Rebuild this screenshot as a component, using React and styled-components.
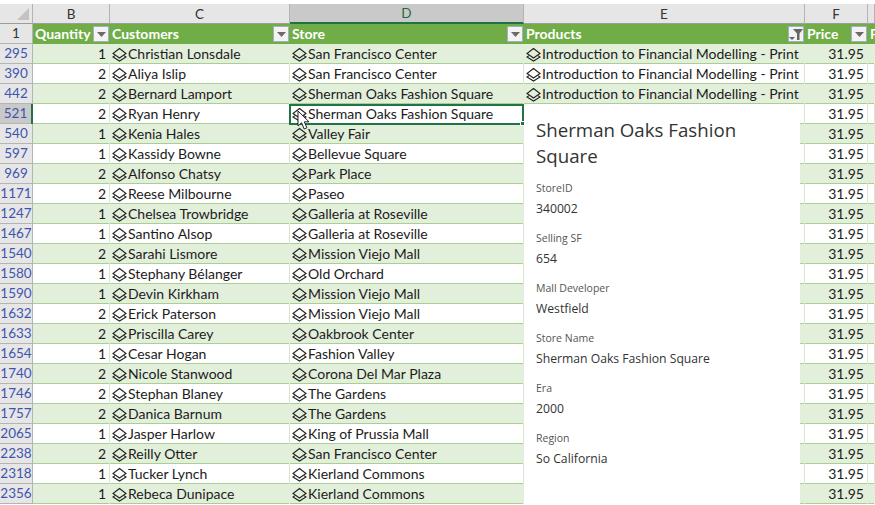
import React from "react";
import styled, { createGlobalStyle } from "styled-components";

const columns = "33px 77px 180px 234px 281px 63px 7px";
const product = "Introduction to Financial Modelling - Print";

const orders = [
  ["295", 1, "Christian Lonsdale", "San Francisco Center", true],
  ["390", 2, "Aliya Islip", "San Francisco Center", true],
  ["442", 2, "Bernard Lamport", "Sherman Oaks Fashion Square", true],
  ["521", 2, "Ryan Henry", "Sherman Oaks Fashion Square"],
  ["540", 1, "Kenia Hales", "Valley Fair"],
  ["597", 1, "Kassidy Bowne", "Bellevue Square"],
  ["969", 2, "Alfonso Chatsy", "Park Place"],
  ["1171", 2, "Reese Milbourne", "Paseo"],
  ["1247", 1, "Chelsea Trowbridge", "Galleria at Roseville"],
  ["1467", 1, "Santino Alsop", "Galleria at Roseville"],
  ["1540", 2, "Sarahi Lismore", "Mission Viejo Mall"],
  ["1580", 1, "Stephany Bélanger", "Old Orchard"],
  ["1590", 1, "Devin Kirkham", "Mission Viejo Mall"],
  ["1632", 2, "Erick Paterson", "Mission Viejo Mall"],
  ["1633", 2, "Priscilla Carey", "Oakbrook Center"],
  ["1654", 1, "Cesar Hogan", "Fashion Valley"],
  ["1740", 2, "Nicole Stanwood", "Corona Del Mar Plaza"],
  ["1746", 2, "Stephan Blaney", "The Gardens"],
  ["1757", 2, "Danica Barnum", "The Gardens"],
  ["2065", 1, "Jasper Harlow", "King of Prussia Mall"],
  ["2238", 2, "Reilly Otter", "San Francisco Center"],
  ["2318", 1, "Tucker Lynch", "Kierland Commons"],
  ["2356", 1, "Rebeca Dunipace", "Kierland Commons"],
];

const details = [
  ["StoreID", "340002"],
  ["Selling SF", "654"],
  ["Mall Developer", "Westfield"],
  ["Store Name", "Sherman Oaks Fashion Square"],
  ["Era", "2000"],
  ["Region", "So California"],
];

const GlobalStyle = createGlobalStyle`
  html, body {
    margin: 0;
    height: 100%;
    overflow: hidden;
    background: #fff;
  }
`;

const Sheet = styled.div`
  position: relative;
  width: 875px;
  height: 505px;
  overflow: hidden;
  padding-top: 4px;
  box-sizing: border-box;
  font-family: Lato, "Liberation Sans", sans-serif;
  font-size: 14px;
  color: #1c1c1c;
`;

const Row = styled.div`
  display: grid;
  grid-template-columns: ${columns};
  height: 20px;
`;

const Corner = styled.div`
  position: relative;
  background: #e6e6e6;
  border-right: 1px solid #b4b4b4;
  border-bottom: 1px solid #9c9c9c;
  &::after {
    content: "";
    position: absolute;
    right: 3px;
    bottom: 3px;
    border-style: solid;
    border-width: 0 0 12px 12px;
    border-color: transparent transparent #c2c2c2 transparent;
  }
`;

const ColumnHead = styled.div`
  display: flex;
  align-items: center;
  justify-content: center;
  background: ${p => (p.$active ? "#c9c9c9" : "#e6e6e6")};
  color: ${p => (p.$active ? "#1f6b43" : "#333")};
  border-right: 1px solid #b4b4b4;
  border-bottom: ${p => (p.$active ? "2px solid #217346" : "1px solid #9c9c9c")};
  font-size: 13.5px;
`;

const RowHead = styled.div`
  display: flex;
  align-items: center;
  justify-content: center;
  padding-bottom: 2px;
  background: ${p => (p.$active ? "#c9c9c9" : "#e6e6e6")};
  color: ${p => p.$color || "#3f55ad"};
  border-right: ${p => (p.$active ? "2px solid #217346" : "1px solid #b4b4b4")};
  box-shadow: inset 0 -1px 0 #b4b4b4;
  box-sizing: border-box;
  font-size: 13.5px;
`;

const TitleCell = styled.div`
  display: flex;
  align-items: center;
  justify-content: space-between;
  min-width: 0;
  overflow: hidden;
  padding: 0 1px 0 2px;
  background: #70ad47;
  color: #fff;
  font-weight: 700;
  white-space: nowrap;
`;

const TitleText = styled.span`
  padding-bottom: 2px;
`;

const FilterButton = styled.span`
  display: flex;
  flex: none;
  align-items: center;
  justify-content: center;
  box-sizing: border-box;
  width: 16px;
  height: 16px;
  background: #f3f3f3;
  border: 1px solid #a9adc4;
`;

const Cell = styled.div`
  display: flex;
  align-items: center;
  justify-content: ${p => (p.$number ? "flex-end" : "flex-start")};
  min-width: 0;
  overflow: hidden;
  padding: ${p => (p.$number ? "0 3px 0 0" : "0 0 0 2px")};
  box-sizing: border-box;
  background: ${p => (p.$striped ? "#e2efda" : "#fff")};
  box-shadow: inset 0 -1px 0 #a9d08e;
  border-right: 1px solid ${p => (p.$striped ? "#e2efda" : "#d9e6d0")};
  white-space: nowrap;
`;

const CellText = styled.span`
  margin-left: ${p => (p.$number ? 0 : 1)}px;
  padding-bottom: 2px;
`;

const Selection = styled.div`
  position: absolute;
  left: 289px;
  top: 104px;
  width: 235px;
  height: 21px;
  box-sizing: border-box;
  border: 2px solid #217346;
  &::after {
    content: "";
    position: absolute;
    right: -3px;
    bottom: -3px;
    width: 5px;
    height: 5px;
    background: #217346;
    border: 1px solid #fff;
    box-sizing: border-box;
  }
`;

const Pointer = styled.svg`
  position: absolute;
  left: 297px;
  top: 110px;
`;

const Card = styled.aside`
  position: absolute;
  left: 524px;
  top: 105px;
  width: 276px;
  height: 400px;
  box-sizing: border-box;
  padding: 12px 12px 0;
  background: #fff;
  font-family: "Open Sans", "Noto Sans", sans-serif;
  color: #333;
`;

const CardTitle = styled.h2`
  margin: 0 0 11px;
  font-size: 18.7px;
  font-weight: 400;
  line-height: 26px;
`;

const Field = styled.div`
  height: 50px;
`;

const FieldLabel = styled.div`
  font-size: 10.5px;
  line-height: 16px;
  color: #555;
`;

const FieldValue = styled.div`
  margin-top: 4px;
  font-size: 12.2px;
  line-height: 18px;
`;

const DataType = () => (
  <svg width="15" height="15" viewBox="0 0 15 15" fill="none" stroke="#222" strokeWidth="1.1" style={{ flex: "none" }}>
    <path d="M7.5 1.5 14 6.5 7.5 11 1 6.5Z" />
    <path d="M3 8.6 1 10 7.5 14 14 10 12 8.6" />
  </svg>
);

const Arrow = () => (
  <svg width="9" height="5" viewBox="0 0 9 5">
    <path d="M0 0h9L4.5 5Z" fill="#6b6b6b" />
  </svg>
);

const Funnel = () => (
  <svg width="14" height="13" viewBox="0 0 14 13">
    <path d="M4 1h10L10.5 5.5V12H8V5.5Z" fill="#666" />
    <path d="M0 9h6L3 12Z" fill="#666" />
  </svg>
);

const Title = ({ children, filtered }) => (
  <TitleCell>
    <TitleText>{children}</TitleText>
    <FilterButton>{filtered ? <Funnel /> : <Arrow />}</FilterButton>
  </TitleCell>
);

const Typed = ({ children, striped }) => (
  <Cell $striped={striped}>
    <DataType />
    <CellText>{children}</CellText>
  </Cell>
);

const Amount = ({ children, striped }) => (
  <Cell $number $striped={striped}>
    <CellText $number>{children}</CellText>
  </Cell>
);

export default function App() {
  return (
    <Sheet>
      <GlobalStyle />
      <Row>
        <Corner />
        <ColumnHead>B</ColumnHead>
        <ColumnHead>C</ColumnHead>
        <ColumnHead $active>D</ColumnHead>
        <ColumnHead>E</ColumnHead>
        <ColumnHead>F</ColumnHead>
        <ColumnHead />
      </Row>
      <Row>
        <RowHead $color="#333">1</RowHead>
        <Title>Quantity</Title>
        <Title>Customers</Title>
        <Title>Store</Title>
        <Title filtered>Products</Title>
        <Title>Price</Title>
        <TitleCell>
          <TitleText>P</TitleText>
        </TitleCell>
      </Row>
      {orders.map(([id, qty, customer, store, showProduct], i) => {
        const striped = i % 2 === 0;
        return (
          <Row key={id}>
            <RowHead $active={id === "521"}>{id}</RowHead>
            <Amount striped={striped}>{qty}</Amount>
            <Typed striped={striped}>{customer}</Typed>
            <Typed striped={striped}>{store}</Typed>
            {showProduct ? <Typed striped={striped}>{product}</Typed> : <Cell $striped={striped} />}
            <Amount striped={striped}>31.95</Amount>
            <Cell $striped={striped} />
          </Row>
        );
      })}
      <Selection />
      <Pointer width="14" height="21" viewBox="0 0 14 21">
        <path d="M1 1v15l3.6-3.2L7.2 19l2.7-1.2-2.6-6H12Z" fill="#fff" stroke="#222" strokeWidth="1" />
      </Pointer>
      <Card>
        <CardTitle>Sherman Oaks Fashion Square</CardTitle>
        {details.map(([label, value]) => (
          <Field key={label}>
            <FieldLabel>{label}</FieldLabel>
            <FieldValue>{value}</FieldValue>
          </Field>
        ))}
      </Card>
    </Sheet>
  );
}
